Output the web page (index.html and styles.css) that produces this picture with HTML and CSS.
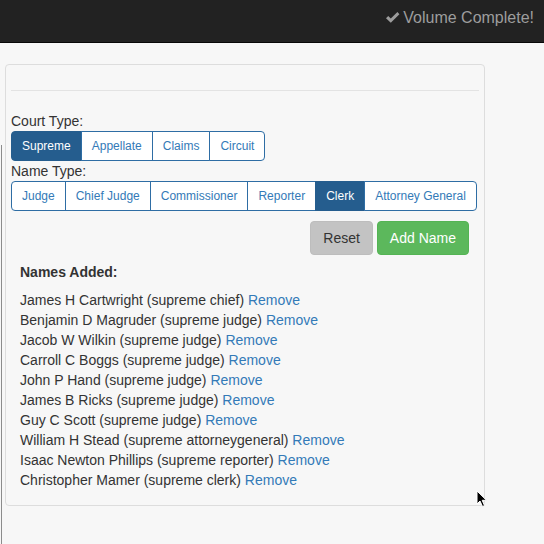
FILE: index.html
```html
<!DOCTYPE html>
<html>
<head>
<meta charset="utf-8">
<link rel="stylesheet" href="styles.css">
</head>
<body>
<div class="navbar">
  <span class="status"><svg class="check" width="15" height="13" viewBox="0 0 15 13"><path d="M1 7.2 L3.2 5 L5.8 7.6 L12.4 1 L14.4 3.2 L5.8 11.8 Z" fill="#9d9d9d"/></svg>Volume Complete!</span>
</div>
<div class="edge"></div>
<div class="panel">
  <div class="panel-top"></div>
  <div class="label">Court Type:</div>
  <div class="btn-group">
    <button class="seg active">Supreme</button><button class="seg">Appellate</button><button class="seg">Claims</button><button class="seg">Circuit</button>
  </div>
  <div class="label">Name Type:</div>
  <div class="btn-group">
    <button class="seg">Judge</button><button class="seg">Chief Judge</button><button class="seg">Commissioner</button><button class="seg">Reporter</button><button class="seg active">Clerk</button><button class="seg">Attorney General</button>
  </div>
  <div class="actions">
    <button class="btn btn-reset">Reset</button>
    <button class="btn btn-add">Add Name</button>
  </div>
  <div class="names">
    <div class="names-title">Names Added:</div>
    <ul class="name-list">
      <li>James H Cartwright (supreme chief) <a href="#">Remove</a></li>
      <li>Benjamin D Magruder (supreme judge) <a href="#">Remove</a></li>
      <li>Jacob W Wilkin (supreme judge) <a href="#">Remove</a></li>
      <li>Carroll C Boggs (supreme judge) <a href="#">Remove</a></li>
      <li>John P Hand (supreme judge) <a href="#">Remove</a></li>
      <li>James B Ricks (supreme judge) <a href="#">Remove</a></li>
      <li>Guy C Scott (supreme judge) <a href="#">Remove</a></li>
      <li>William H Stead (supreme attorneygeneral) <a href="#">Remove</a></li>
      <li>Isaac Newton Phillips (supreme reporter) <a href="#">Remove</a></li>
      <li>Christopher Mamer (supreme clerk) <a href="#">Remove</a></li>
    </ul>
  </div>
</div>
<svg class="cursor" width="12" height="18" viewBox="0 0 12 18"><path d="M1 1 L1 14 L4 11 L6.5 16.5 L8.5 15.6 L6.2 10.3 L10.5 10.3 Z" fill="#000" stroke="#fff" stroke-width="1"/></svg>
</body>
</html>
```

FILE: styles.css
```css
html, body {
  margin: 0;
  padding: 0;
}
body {
  background: #f7f7f7;
  font-family: "Liberation Sans", Arial, sans-serif;
  font-size: 14px;
  line-height: 20px;
  color: #333;
  position: relative;
  min-height: 544px;
}
.navbar {
  height: 42px;
  background: #222;
  border-bottom: 1px solid #080808;
  display: flex;
  justify-content: flex-end;
  align-items: flex-start;
  padding: 0 10px 0 0;
}
.status {
  color: #9d9d9d;
  font-size: 16px;
  line-height: 20px;
  margin-top: 8px;
  display: flex;
  align-items: center;
}
.check {
  margin-right: 3px;
  margin-top: -1px;
}
.edge {
  position: absolute;
  left: 1px;
  top: 145px;
  bottom: 0;
  width: 1px;
  background: #8c8c8c;
}
.panel {
  margin: 21px 0 0 5px;
  border: 1px solid #dddddd;
  border-radius: 4px;
  padding: 0 5px 15px 5px;
  box-sizing: content-box;
  width: 468px;
}
.panel-top {
  height: 25px;
  border-bottom: 1px solid #e3e3e3;
  margin-bottom: 20px;
}
.label {
  line-height: 20px;
  color: #333;
}
.btn-group {
  display: inline-flex;
  border-radius: 4px;
}
.seg {
  font-family: "Liberation Sans", Arial, sans-serif;
  font-size: 12px;
  line-height: 18px;
  padding: 5px 10px;
  background: #fff;
  color: #337ab7;
  border: 1px solid #2e6da4;
  margin-left: -1px;
  border-radius: 0;
}
.seg:first-child {
  margin-left: 0;
  border-radius: 4px 0 0 4px;
}
.seg:last-child {
  border-radius: 0 4px 4px 0;
}
.seg.active {
  background: #255d8e;
  color: #fff;
  border-color: #255d8e;
}
.actions {
  display: flex;
  justify-content: flex-end;
  gap: 4px;
  margin-top: 10px;
  padding-right: 10px;
}
.btn {
  font-family: "Liberation Sans", Arial, sans-serif;
  font-size: 14px;
  line-height: 20px;
  padding: 6px 12px;
  border-radius: 4px;
  border: 1px solid transparent;
}
.btn-reset {
  background: #c3c3c3;
  border-color: #bdbdbd;
  color: #333;
}
.btn-add {
  background: #5cb85c;
  border-color: #54b454;
  color: #fff;
}
.names {
  padding-left: 9px;
  margin-top: 7px;
}
.names-title {
  font-weight: bold;
}
.name-list {
  list-style: none;
  margin: 8px 0 0 0;
  padding: 0;
}
.name-list li {
  line-height: 20px;
}
.name-list a {
  color: #337ab7;
  text-decoration: none;
}
.cursor {
  position: absolute;
  left: 476px;
  top: 490px;
}
```
